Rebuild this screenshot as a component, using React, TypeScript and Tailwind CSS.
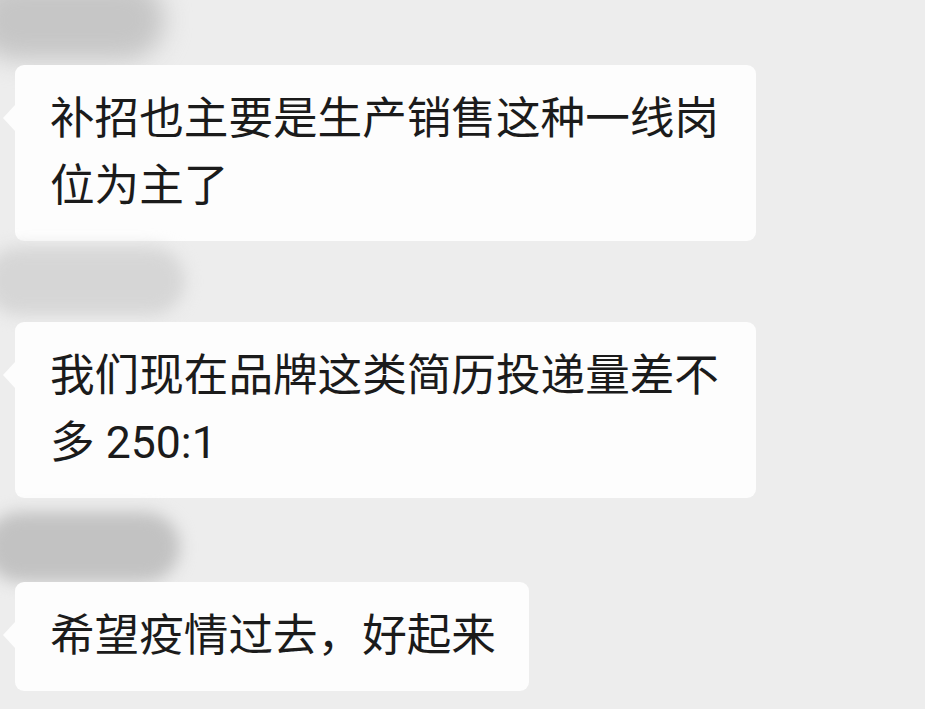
import React from "react";

const font = { fontFamily: 'Roboto, "Noto Sans CJK SC", "Noto Sans", sans-serif' };

function Bubble({ children }: { children: React.ReactNode }) {
  return (
    <div className="relative w-fit max-w-[741px] rounded-[9px] bg-[#fdfdfd] pl-[35px] pr-[33px] py-[21px]">
      <div className="absolute left-[-12px] top-[40px] h-0 w-0 border-y-[13px] border-r-[12px] border-y-transparent border-r-[#fdfdfd]" />
      <p className="text-[44.6px] leading-[67px] text-[#1b1b1b]">{children}</p>
    </div>
  );
}

export default function App() {
  return (
    <div
      className="relative h-[709px] w-[925px] overflow-hidden bg-[#ededed] pl-[15px]"
      style={font}
    >
      <div className="flex flex-col">
        {/* name row 1 (blurred) */}
        <div className="relative h-[65px]">
          <div className="absolute -left-[40px] -top-[20px] h-[80px] w-[190px] rounded-full bg-[#c6c6c6] blur-[12px]" />
        </div>
        <Bubble>补招也主要是生产销售这种一线岗位为主了</Bubble>

        {/* name row 2 */}
        <div className="relative h-[81px]">
          <div className="absolute -left-[30px] top-[6px] h-[68px] w-[200px] rounded-full bg-[#d6d6d6] blur-[8px]" />
        </div>
        <Bubble>我们现在品牌这类简历投递量差不多 250:1</Bubble>

        {/* name row 3 */}
        <div className="relative h-[84px]">
          <div className="absolute -left-[30px] top-[14px] h-[70px] w-[195px] rounded-full bg-[#c2c2c2] blur-[8px]" />
        </div>
        <Bubble>希望疫情过去，好起来</Bubble>
      </div>
    </div>
  );
}
